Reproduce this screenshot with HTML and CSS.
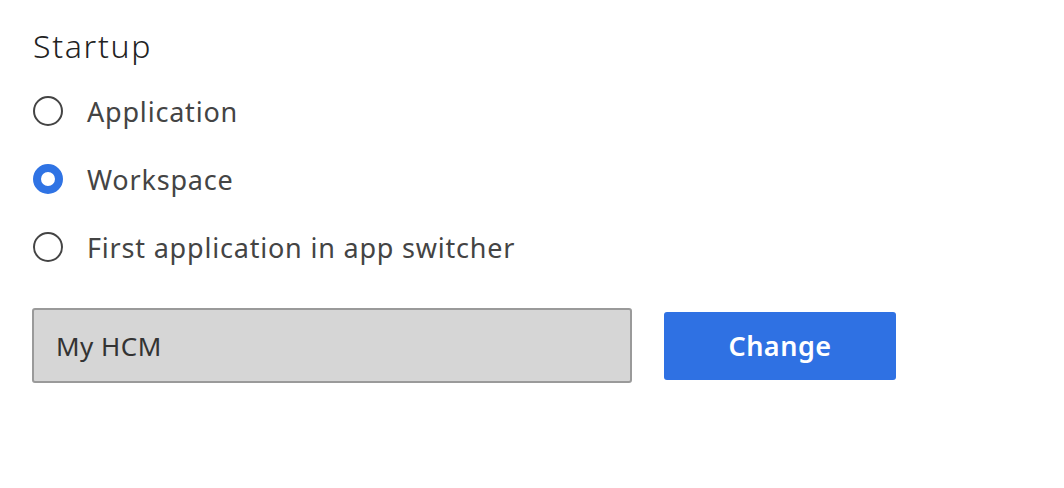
FILE: index.html
```html
<!DOCTYPE html>
<html>
<head>
<meta charset="utf-8">
<link rel="stylesheet" href="styles.css">
</head>
<body>
<div class="panel">
  <h1 class="title">Startup</h1>
  <div class="options">
    <label class="option"><span class="radio"></span><span class="label">Application</span></label>
    <label class="option"><span class="radio checked"></span><span class="label">Workspace</span></label>
    <label class="option"><span class="radio"></span><span class="label">First application in app switcher</span></label>
  </div>
  <div class="field-row">
    <div class="field">My HCM</div>
    <button class="btn">Change</button>
  </div>
</div>
</body>
</html>
```
FILE: styles.css
```css
html, body {
  margin: 0;
  padding: 0;
  background: #ffffff;
}
body {
  font-family: "Noto Sans", "Lato", sans-serif;
}
.panel {
  padding: 0 0 0 32px;
  display: flex;
  flex-direction: column;
}
.title {
  margin: 0;
  height: 77px;
  box-sizing: border-box;
  padding: 26px 0 0 1px;
  font-size: 32px;
  line-height: 40px;
  font-weight: 300;
  letter-spacing: 1.7px;
  color: #222222;
}
.options {
  display: flex;
  flex-direction: column;
  padding-left: 1px;
}
.option {
  height: 68px;
  display: flex;
  align-items: center;
  gap: 24px;
}
.radio {
  width: 30px;
  height: 30px;
  box-sizing: border-box;
  border: 2px solid #444444;
  border-radius: 50%;
  flex: none;
}
.radio.checked {
  border: 8px solid #2f73e4;
}
.label {
  font-size: 27px;
  letter-spacing: 0.8px;
  color: #444444;
}
.field-row {
  margin-top: 27px;
  display: flex;
  align-items: center;
  gap: 32px;
}
.field {
  width: 600px;
  height: 75px;
  box-sizing: border-box;
  border: 2px solid #9a9a9a;
  border-radius: 3px;
  background: #d6d6d6;
  padding-left: 22px;
  display: flex;
  align-items: center;
  font-size: 26px;
  letter-spacing: 0.5px;
  color: #333333;
}
.btn {
  width: 232px;
  height: 68px;
  border: none;
  border-radius: 3px;
  background: #2f71e3;
  color: #ffffff;
  font-family: inherit;
  font-size: 27px;
  font-weight: 600;
  letter-spacing: 0.5px;
  padding: 0;
}
```
